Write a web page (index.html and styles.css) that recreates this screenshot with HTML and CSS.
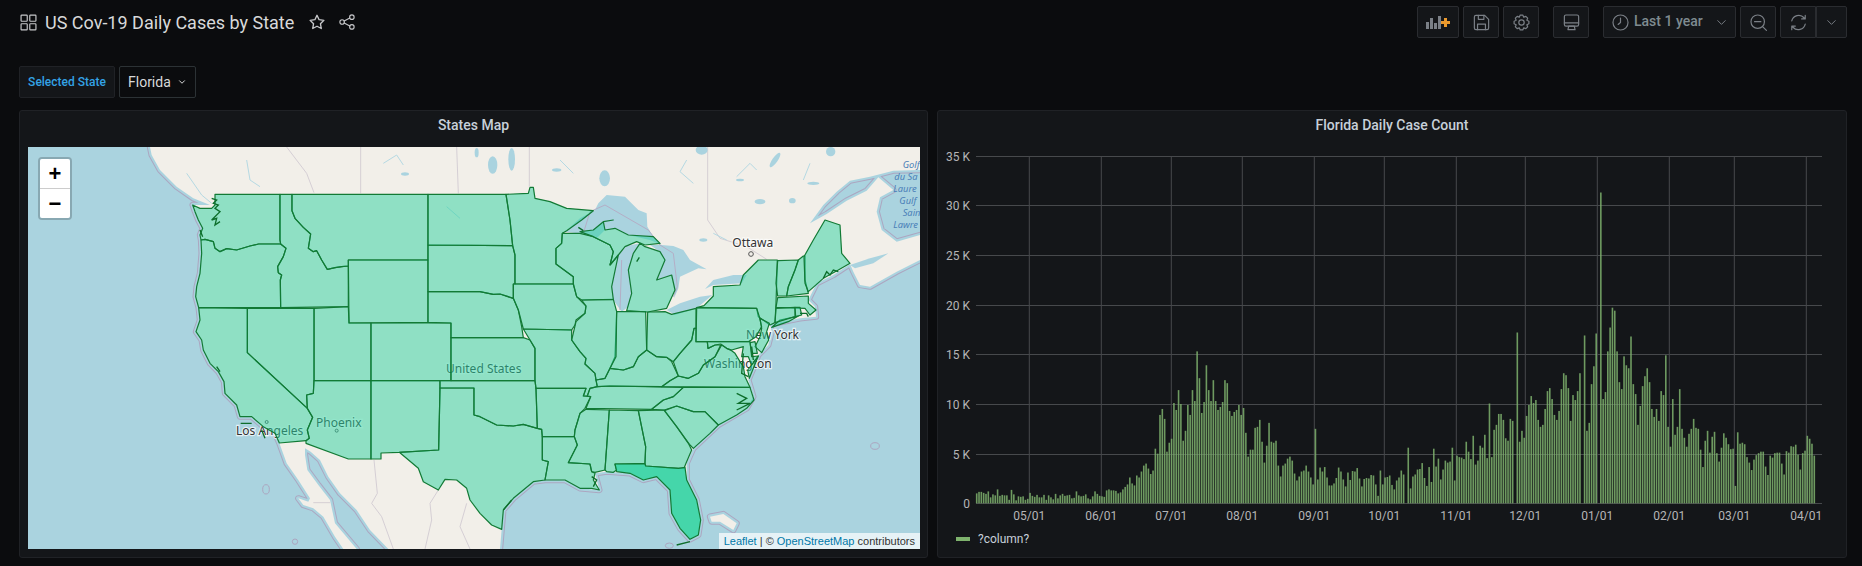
FILE: index.html
```html
<!DOCTYPE html>
<html lang="en">
<head>
    <meta charset="UTF-8">
    <meta name="viewport" content="width=device-width, initial-scale=1.0">
    <title>US Cov-19 Daily Cases by State</title>
    <link rel="stylesheet" href="styles.css">
</head>
<body>
    <header class="topbar">
        <div class="title-group">
            <svg class="icon icon-grid" viewBox="0 0 16 16"><rect x="1" y="1" width="5.8" height="5.8" rx=".6"/><rect x="9.2" y="1" width="5.8" height="5.8" rx=".6"/><rect x="1" y="9.2" width="5.8" height="5.8" rx=".6"/><rect x="9.2" y="9.2" width="5.8" height="5.8" rx=".6"/></svg>
            <h1>US Cov-19 Daily Cases by State</h1>
            <svg class="icon star" viewBox="0 0 24 24"><polygon points="12 3 14.8 8.9 21.2 9.8 16.6 14.3 17.7 20.7 12 17.7 6.3 20.7 7.4 14.3 2.8 9.8 9.2 8.9"/></svg>
            <svg class="icon share" viewBox="0 0 24 24"><circle cx="18.5" cy="5.5" r="3"/><circle cx="5.5" cy="12" r="3"/><circle cx="18.5" cy="18.5" r="3"/><path d="M8.2 10.6l7.6-3.8M8.2 13.4l7.6 3.8"/></svg>
        </div>
        <div class="toolbar">
            <div class="btn btn-add">
                <svg width="26" height="16" viewBox="0 0 26 16"><path class="bars" d="M1 8h3v7H1zM5 4h3v11H5zM9 9h3v6H9zM13 2h3v13h-3z"/><path class="plus" d="M19 4h3v3h3v3h-3v3h-3v-3h-3V7h3z"/></svg>
            </div>
            <div class="btn">
                <svg class="icon" viewBox="0 0 24 24"><path d="M5 3h11l5 5v11a2 2 0 0 1-2 2H5a2 2 0 0 1-2-2V5a2 2 0 0 1 2-2z"/><path d="M8 3v5h7V3M7 21v-7h10v7"/></svg>
            </div>
            <div class="btn">
                <svg class="icon" viewBox="0 0 24 24"><polygon points="21.36,13.65 18.74,14.79 19.78,17.45 17.45,19.78 14.79,18.74 13.65,21.36 10.35,21.36 9.21,18.74 6.55,19.78 4.22,17.45 5.26,14.79 2.64,13.65 2.64,10.35 5.26,9.21 4.22,6.55 6.55,4.22 9.21,5.26 10.35,2.64 13.65,2.64 14.79,5.26 17.45,4.22 19.78,6.55 18.74,9.21 21.36,10.35"/><circle cx="12" cy="12" r="3.4"/></svg>
            </div>
            <div class="btn btn-spaced">
                <svg class="icon" viewBox="0 0 24 24"><rect x="3" y="2.5" width="18" height="14" rx="2"/><path d="M3 12.5h18M7.5 21h9l-1-4.5h-7z"/></svg>
            </div>
            <div class="btn btn-time btn-spaced">
                <svg class="icon" viewBox="0 0 24 24"><circle cx="12" cy="12" r="9.5"/><path d="M12 6.5V12l-3 2.5"/></svg>
                <span>Last 1 year</span>
                <svg class="icon chevron" viewBox="0 0 24 24"><path d="M6 9l6 6 6-6"/></svg>
            </div>
            <div class="btn">
                <svg class="icon" viewBox="0 0 24 24"><circle cx="11" cy="11" r="8.5"/><path d="M7 11h8M17.5 17.5L22 22"/></svg>
            </div>
            <div class="btn-pair">
                <div class="btn">
                    <svg class="icon" viewBox="0 0 24 24"><path d="M3.5 10A9 9 0 0 1 19 6l1.5 1.5M20.5 14A9 9 0 0 1 5 18l-1.5-1.5M20.5 3v4.5H16M3.5 21v-4.5H8"/></svg>
                </div>
                <div class="btn btn-caret">
                    <svg class="icon chevron" viewBox="0 0 24 24"><path d="M6 9l6 6 6-6"/></svg>
                </div>
            </div>
        </div>
    </header>

    <div class="variables">
        <label class="var-label">Selected State</label>
        <div class="var-value">
            <span>Florida</span>
            <svg class="icon chevron-small" viewBox="0 0 24 24"><path d="M6 9l6 6 6-6"/></svg>
        </div>
    </div>

    <main class="panels">
        <section class="panel">
            <div class="panel-title">States Map</div>
            <div class="map">
                <svg class="map-svg" viewBox="24 21 2676 1206">
                    <rect class="water" x="24" y="21" width="2676" height="1206"/>
                    <defs>
                        <polygon id="landWest" points="390,21 1381,21 1381,1227 1105,1227 1050,1170 1010,1110 960,1060 925,1010 900,960 872,935 855,925 855,945 862,990 895,1035 930,1080 945,1150 1010,1227 970,1227 945,1190 910,1130 880,1105 850,1095 835,1075 865,1085 870,1075 835,1020 800,970 778,909 765,880 730,860 695,830 660,830 650,795 615,760 612,725 595,695 570,670 550,630 545,600 528,575 540,540 536,503 527,470 530,440 540,400 545,340 543,300 540,285 548,265 535,240 525,215 518,195 570,195 520,175 470,140 420,90 395,45"/>
                        <polygon id="landEast" transform="translate(1380 0)" points="0,21 1320,21 1320,90 1240,92 1170,110 1110,122 1070,155 1030,195 990,250 1040,222 1100,182 1160,152 1195,112 1240,150 1200,172 1190,215 1205,270 1250,305 1320,285 1320,360 1250,395 1170,440 1140,435 1120,395 1110,372 1060,405 1010,430 985,480 1005,500 1008,530 960,535 870,553 875,575 865,615 835,645 820,685 805,720 820,770 800,805 715,855 640,925 620,970 620,1020 650,1080 662,1140 655,1185 630,1198 600,1165 575,1120 570,1050 530,1010 490,1020 450,1000 380,995 345,1000 358,1050 300,1045 255,1020 195,1020 160,1025 100,1075 70,1110 65,1168 60,1227 0,1227"/>
                        <polygon id="landCuba" transform="translate(1380 0)" points="690,1130 730,1122 770,1150 760,1170 720,1145 695,1145"/>
                    </defs>
                    <use class="coast-ring" href="#landWest"/>
                    <use class="coast-ring" href="#landEast"/>
                    <use class="coast-ring" href="#landCuba"/>
                    <use class="coast-gap" href="#landWest"/>
                    <use class="coast-gap" href="#landEast"/>
                    <use class="coast-gap" href="#landCuba"/>
                    <use class="land" href="#landWest"/>
                    <use class="land" href="#landEast"/>
                    <use class="land" href="#landCuba"/>

                    <ellipse class="ring" cx="738" cy="1048" rx="10" ry="14"/>
                    <circle class="ring" cx="825" cy="1205" r="8"/>
                    <ellipse class="ring" cx="2565" cy="918" rx="13" ry="10"/>
                    <ellipse class="ring" cx="1948" cy="1217" rx="12" ry="8"/>

                    <path class="border" d="M800 21L860 100L882 158M1022 21V160M1310 21L1315 160M1528 21V140M2063 21V240L2100 295L2180 320L2240 358M1062 960L1072 1060L1055 1090L1085 1130L1120 1227M1255 1050L1230 1090L1235 1140L1215 1227M880 1088H930M1340 1090L1320 1160L1350 1227"/>
                    <path class="water-line" d="M500 100L545 165L575 190M680 60L690 120L720 140M1090 70L1130 45L1150 75M1280 200L1320 235M2000 60L1980 95L2020 130M2150 110L2190 70L2210 90M2370 70L2350 120M2080 280L2120 300M1620 60L1660 100"/>
                    <g class="water" transform="translate(1380 0)">
                        <polygon points="255,275 300,235 345,210 355,190 380,165 435,170 475,210 500,220 502,260 520,290 545,315 510,300 445,285 405,265 375,270 350,295 310,282"/>
                        <polygon points="415,345 395,440 400,480 425,515 445,500 455,460 445,390 460,340 480,310 440,318"/>
                        <polygon points="510,315 545,315 580,318 610,330 630,360 680,388 655,385 600,410 595,445 582,475 585,450 575,405 530,420 555,360 540,335"/>
                        <polygon points="560,510 585,525 650,505 697,465 660,470 600,490"/>
                        <polygon points="675,447 700,435 785,430 800,405 760,405 700,420"/>
                        <polygon points="1110,375 1170,355 1225,340 1180,370 1125,385"/>
                        <ellipse cx="374" cy="115" rx="16" ry="24"/>
                        <ellipse cx="38" cy="75" rx="14" ry="26"/>
                        <ellipse cx="95" cy="58" rx="10" ry="34"/>
                        <ellipse cx="937" cy="182" rx="10" ry="8"/>
                        <ellipse cx="885" cy="60" rx="8" ry="26" transform="rotate(35 885 60)"/>
                        <ellipse cx="840" cy="185" rx="16" ry="8"/>
                        <ellipse cx="1052" cy="35" rx="14" ry="14"/>
                        <ellipse cx="665" cy="30" rx="18" ry="14"/>
                        <ellipse cx="230" cy="90" rx="14" ry="5"/>
                        <ellipse cx="1000" cy="130" rx="18" ry="5"/>
                        <ellipse cx="780" cy="120" rx="12" ry="4"/>
                        <ellipse cx="670" cy="300" rx="12" ry="5"/>
                    </g>
                    <ellipse class="water" cx="1155" cy="102" rx="12" ry="5"/>
                    <ellipse class="water" cx="1370" cy="38" rx="6" ry="14"/>
                    <path class="lake-border" transform="translate(1380 0)" d="M310 280L330 215L375 195L505 270L540 315L580 340L592 440L580 470M425 360L420 510"/>

                    <g class="place">
                        <text x="648" y="884">Los Angeles</text>
                        <text x="888" y="860">Phoenix</text>
                        <circle class="dot" cx="950" cy="872" r="4.5"/>
                        <circle class="dot" cx="740" cy="846" r="4.5"/>
                        <text x="1278" y="698">United States</text>
                    </g>
                    <g class="place" transform="translate(1380 0)">
                        <text x="757" y="322">Ottawa</text>
                        <circle class="dot" cx="813" cy="342" r="7"/>
                        <text x="798" y="596">New York</text>
                        <text x="672" y="684">Washington</text>
                    </g>
                    <g class="sea-label" transform="translate(1380 0)">
                        <text x="1268" y="84">Golf</text>
                        <text x="1243" y="120">du Sa</text>
                        <text x="1240" y="156">Laure</text>
                        <text x="1258" y="191">Gulf</text>
                        <text x="1268" y="227">Sain</text>
                        <text x="1240" y="264">Lawre</text>
                    </g>

                    <g class="states">
                        <polygon points="585,163 780,163 780,300 782,312 716,312 690,318 650,330 620,326 600,335 585,325 580,305 555,298 543,300 540,285 548,265 535,240 525,215 518,195 540,205 575,205 585,195"/>
                        <polygon points="543,300 555,298 580,305 585,325 600,335 620,326 650,330 690,318 716,312 782,312 798,325 790,350 773,380 775,398 785,405 781,420 782,503 536,503 527,470 530,440 540,400 545,340"/>
                        <polygon points="780,163 816,163 816,212 825,235 850,262 872,282 865,325 880,335 890,332 905,360 922,388 945,383 965,380 985,378 985,500 782,503 781,420 785,405 775,398 773,380 790,350 798,325 782,312 780,300"/>
                        <polygon points="816,163 1224,163 1224,360 985,360 985,378 965,380 945,383 922,388 905,360 890,332 880,335 865,325 872,282 850,262 825,235 816,212"/>
                        <polygon points="985,360 1224,360 1224,547 987,549"/>
                        <polygon points="882,505 985,500 987,549 1053,549 1053,722 882,722"/>
                        <polygon points="682,505 882,505 882,722 880,760 860,765 862,805 682,638"/>
                        <polygon points="536,503 682,505 682,638 862,805 878,832 862,870 868,895 858,902 778,909 765,880 730,860 695,830 660,830 650,795 615,760 612,725 595,695 570,670 550,630 545,600 528,575 540,540"/>
                        <polygon points="882,722 1053,722 1053,957 985,957 858,910 858,902 868,895 862,870 878,832 862,805 860,765 880,760"/>
                        <polygon points="1053,549 1293,549 1293,722 1053,722"/>
                        <polygon points="1053,722 1260,722 1260,745 1256,930 1138,937 1083,939 1083,957 1053,957"/>
                        <polygon points="1260,744 1362,744 1362,825 1380,830 1430,855 1480,858 1510,853 1552,865 1565,868 1567,890 1567,960 1585,965 1575,1020 1540,1025 1480,1075 1450,1110 1445,1168 1415,1155 1380,1120 1350,1080 1340,1045 1310,1020 1275,1018 1255,1050 1210,1025 1195,985 1138,937 1256,930"/>
                        <polygon points="1260,722 1545,722 1548,745 1552,865 1510,853 1480,858 1430,855 1380,830 1362,825 1362,744 1260,744"/>
                        <polygon points="1293,593 1510,593 1530,600 1545,625 1545,722 1293,722"/>
                        <polygon points="1224,455 1380,455 1420,463 1440,462 1480,475 1495,510 1505,560 1510,593 1293,593 1293,549 1224,547"/>
                        <polygon points="1224,315 1478,317 1485,345 1485,432 1480,432 1480,475 1440,462 1420,463 1380,455 1224,455"/>
                        <polygon points="1224,163 1458,163 1470,240 1478,317 1224,315"/>
                        <polygon points="1458,163 1525,160 1530,142 1540,142 1545,175 1590,185 1640,205 1720,212 1685,240 1640,272 1627,280 1625,310 1608,325 1608,372 1660,410 1660,432 1485,432 1485,345 1478,317 1470,240"/>
                        <g transform="translate(1380 0)">
                            <polygon points="100,432 280,432 290,470 318,498 315,520 288,540 285,555 275,570 130,567 115,510 100,475"/>
                            <polygon points="130,567 275,570 275,600 300,635 318,655 315,672 345,700 348,720 352,740 330,745 322,768 310,768 318,745 168,745 165,722 165,625 150,600"/>
                            <polygon points="168,745 318,745 310,768 332,770 315,805 300,820 285,870 283,890 187,890 185,868 172,865"/>
                            <polygon points="187,890 283,890 292,915 265,968 330,972 335,995 345,1000 340,1020 358,1050 335,1045 300,1045 255,1020 195,1020 205,965 187,960"/>
                            <polygon points="318,808 388,810 375,990 345,997 335,995 330,972 265,968 292,915 283,890 285,870 300,820"/>
                            <polygon points="388,810 475,812 497,920 495,970 405,972 410,990 400,997 380,995 375,990"/>
                            <polygon points="475,812 553,810 590,860 625,910 635,930 618,970 612,985 595,985 497,978 495,970 497,920"/>
                            <polygon points="553,812 590,798 640,815 675,815 715,855 690,880 640,925 630,915 590,860"/>
                            <polygon points="610,742 810,742 822,780 800,805 770,825 715,855 675,815 640,815 590,798 553,810 515,808 550,780 580,770"/>
                            <polygon points="352,740 390,738 610,742 580,770 550,780 515,808 318,805 332,770 322,768 330,745"/>
                            <polygon points="352,740 348,720 375,715 390,685 430,690 460,680 475,650 500,630 530,650 560,652 575,665 595,708 570,722 545,740 390,738"/>
                            <polygon points="545,740 570,722 595,708 625,715 655,700 670,675 705,650 725,615 740,625 755,632 765,640 780,665 790,680 795,710 810,742"/>
                            <polygon points="648,565 648,605 682,605 684,625 705,615 722,615 705,650 670,675 655,700 625,715 595,708 580,665 600,640 635,600 642,565"/>
                            <polygon points="503,516 555,515 575,523 648,505 648,565 642,565 635,600 600,640 580,665 560,652 530,650 500,630"/>
                            <polygon points="410,515 497,515 500,630 475,650 460,680 430,690 390,685 405,650"/>
                            <polygon points="305,480 400,478 410,515 408,650 390,685 375,715 348,720 345,700 315,672 318,655 300,635 275,600 288,545 315,520 318,498"/>
                            <polygon points="247,280 300,280 340,290 390,315 400,335 390,375 415,345 395,440 400,478 305,480 290,470 280,432 280,410 228,372 228,325 245,310"/>
                            <polygon points="440,512 503,516 560,505 585,450 575,405 530,420 555,360 540,335 495,320 480,310 460,340 445,390 455,460"/>
                            <polygon points="300,275 340,290 390,315 400,335 390,375 415,345 435,320 470,305 495,315 540,310 520,290 445,285 405,265 375,270 370,245 400,240 370,245 340,270"/>
                            <polygon points="672,497 700,468 700,440 780,435 790,405 835,360 892,360 890,430 888,490 885,548 870,555 835,530 830,505 650,503"/>
                            <polygon points="875,562 900,540 955,528 925,545"/>
                            <polygon points="650,503 830,505 838,530 845,560 828,590 805,605 648,605"/>
                            <polygon points="840,535 868,550 860,575 866,600 845,638 825,620 840,590 845,565"/>
                            <polygon points="810,608 825,605 832,640 815,640"/>
                            <polygon points="682,605 810,605 815,650 835,648 815,675 805,650 785,650 790,620 755,630 740,625 722,612 705,615 684,625"/>
                            <polygon points="815,675 835,648 820,685 808,715 803,690"/>
                            <polygon points="893,362 955,360 945,390 925,440 920,468 893,468 888,430"/>
                            <polygon points="955,360 970,348 975,348 975,420 985,460 920,468 925,440 945,390"/>
                            <polygon points="975,430 972,350 1000,300 1035,240 1080,255 1085,340 1110,370 1075,390 1030,415 985,455"/>
                            <polygon points="893,473 985,468 985,490 1008,510 990,525 975,505 888,502"/>
                            <polygon points="888,505 945,502 945,530 885,548"/>
                            <polygon points="945,502 960,502 965,525 947,530"/>
                            <polygon class="selected" points="405,972 495,972 497,978 595,985 615,982 620,1020 650,1080 662,1140 655,1185 630,1198 600,1165 575,1120 570,1050 530,1010 490,1020 450,1000 410,995"/>
                        </g>
                    </g>

                    <path class="scribble" d="M575 175L590 180L580 190L595 195L585 205L600 215L575 240L590 235L585 255L600 245M590 680L600 695M662 850H695M725 870L735 895M540 270L548 290"/>
                    <path class="scribble" transform="translate(1380 0)" d="M295 262L310 272M470 365L478 352M1030 415L1040 395L1050 405L1060 390L1075 395M960 520L980 520L985 530M770 760L800 775L775 790L810 790L770 810M790 640L785 700L805 710M815 620L820 660M70 1110L95 1080M335 1010L350 1020L340 1040M590 1215L630 1205"/>
                </svg>
                <div class="zoom-control">
                    <div class="zoom-btn">+</div>
                    <div class="zoom-btn">&minus;</div>
                </div>
                <div class="attribution"><a>Leaflet</a> | © <a>OpenStreetMap</a> contributors</div>
            </div>
        </section>

        <section class="panel">
            <div class="panel-title">Florida Daily Case Count</div>
            <svg id="chart" class="chart" viewBox="938 147 908 378"></svg>
            <div class="legend">
                <span class="legend-swatch"></span>
                <span>?column?</span>
            </div>
        </section>
    </main>

    <script src="chart.js"></script>
</body>
</html>
```

FILE: styles.css
```css
* {
    box-sizing: border-box;
}
body {
    margin: 0;
    height: 566px;
    overflow: hidden;
    padding: 6px 15px 0 19px;
    background-color: #0b0c0e;
    color: #d8d9da;
    font-family: Roboto, "Liberation Sans", sans-serif;
}
.icon {
    width: 19px;
    height: 19px;
    fill: none;
    stroke: currentColor;
    stroke-width: 1.5;
    stroke-linejoin: round;
    stroke-linecap: round;
    flex: none;
}
.topbar {
    display: flex;
    justify-content: space-between;
    height: 32px;
}
.title-group {
    display: flex;
    align-items: center;
    color: #c7c8ca;
}
.icon-grid {
    width: 17px;
    height: 17px;
    margin-left: 1px;
}
.icon-grid rect {
    stroke-width: 1.1;
}
.title-group h1 {
    margin: 0 14px 0 8px;
    font-size: 18px;
    font-weight: 400;
    color: #d8d9da;
}
.star {
    width: 18px;
    height: 18px;
    stroke-width: 1.8;
}
.share {
    width: 18px;
    height: 18px;
    margin-left: 12px;
}
.toolbar {
    display: flex;
    color: #7b8087;
}
.btn {
    display: flex;
    align-items: center;
    justify-content: center;
    width: 36px;
    height: 32px;
    margin-left: 4px;
    background-color: #141619;
    border: 1px solid #2a2c30;
    border-radius: 2px;
}
.btn-add {
    width: 42px;
    margin-left: 0;
}
.bars {
    fill: #7b8087;
}
.plus {
    fill: #eb9a2e;
}
.btn-spaced {
    margin-left: 14px;
}
.btn-time {
    width: 133px;
    padding: 0 6px 0 7px;
    justify-content: flex-start;
    font-size: 14px;
    font-weight: 500;
}
.btn-time span {
    margin-left: 4px;
    margin-bottom: 2px;
    color: #7f8b90;
}
.btn-time .chevron {
    margin-left: auto;
}
.btn-pair {
    display: flex;
    margin-left: 4px;
}
.btn-pair .btn {
    margin-left: 0;
    border-radius: 2px 0 0 2px;
}
.btn-pair .btn-caret {
    width: 31px;
    border-left: 1px solid #2a2c30;
    border-radius: 0 2px 2px 0;
}
.chevron {
    width: 15px;
    height: 15px;
}
.variables {
    display: flex;
    margin-top: 28px;
    height: 32px;
}
.var-label {
    display: flex;
    align-items: center;
    justify-content: center;
    width: 96px;
    background-color: #141619;
    border: 1px solid #202226;
    border-radius: 2px;
    color: #33a2e5;
    font-size: 12px;
    font-weight: 500;
}
.var-value {
    display: flex;
    align-items: center;
    gap: 6px;
    width: 77px;
    margin-left: 4px;
    padding-left: 8px;
    border: 1px solid #2c3235;
    border-radius: 2px;
    font-size: 14px;
}
.chevron-small {
    width: 10px;
    height: 10px;
    stroke-width: 2.4;
}
.panels {
    display: grid;
    grid-template-columns: 909px 910px;
    gap: 9px;
    margin-top: 12px;
    height: 448px;
}
.panel {
    background-color: #141619;
    border: 1px solid #202226;
    border-radius: 3px;
}
.panel-title {
    height: 28px;
    margin-bottom: 8px;
    line-height: 28px;
    text-align: center;
    font-size: 14px;
    font-weight: 500;
    color: #c7d0d9;
}
.map {
    position: relative;
    width: 892px;
    height: 402px;
    margin-left: 8px;
    overflow: hidden;
}
.map-svg {
    display: block;
    width: 892px;
    height: 402px;
}
.water {
    fill: #aad3df;
}
.land {
    fill: #f2efe9;
}
.coast-ring {
    fill: #aca6c0;
    stroke: #aca6c0;
    stroke-width: 19;
    stroke-linejoin: round;
}
.coast-gap {
    fill: #aad3df;
    stroke: #aad3df;
    stroke-width: 13;
    stroke-linejoin: round;
}
.ring {
    fill: none;
    stroke: #aca6c0;
    stroke-width: 3;
}
.border {
    fill: none;
    stroke: #cfc8d0;
    stroke-width: 2.5;
}
.lake-border {
    fill: none;
    stroke: #b4aec6;
    stroke-width: 3;
}
.water-line {
    fill: none;
    stroke: #b5d9e3;
    stroke-width: 3;
}
.place text {
    font-family: "Noto Sans", "Open Sans", sans-serif;
    font-size: 36px;
    fill: #333333;
    stroke: #ffffff;
    stroke-width: 7px;
    stroke-opacity: .7;
    paint-order: stroke;
}
.dot {
    fill: none;
    stroke: #555555;
    stroke-width: 3;
}
.sea-label text {
    font-family: "Noto Sans", "Open Sans", sans-serif;
    font-size: 28px;
    font-style: italic;
    fill: #4a80b8;
}
.states polygon {
    fill: rgba(44, 209, 159, .5);
    stroke: #127a35;
    stroke-width: 3.6;
    stroke-linejoin: round;
}
.states .selected {
    fill: rgba(39, 209, 159, .85);
}
.scribble {
    fill: none;
    stroke: #0d6e2b;
    stroke-width: 4;
}
.zoom-control {
    position: absolute;
    top: 10px;
    left: 10px;
    width: 34px;
    border: 2px solid rgba(0, 0, 0, .2);
    border-radius: 4px;
    background-clip: padding-box;
}
.zoom-btn {
    height: 29px;
    line-height: 30px;
    text-align: center;
    background-color: #ffffff;
    color: #000000;
    font-family: "Liberation Sans", sans-serif;
    font-size: 22px;
    font-weight: 700;
}
.zoom-btn:first-child {
    height: 30px;
    border-bottom: 1px solid #cccccc;
    border-radius: 2px 2px 0 0;
}
.zoom-btn:last-child {
    border-radius: 0 0 2px 2px;
}
.attribution {
    position: absolute;
    right: 0;
    bottom: 0;
    height: 16px;
    padding: 0 5px;
    line-height: 16px;
    background-color: rgba(255, 255, 255, .7);
    color: #333333;
    font-family: "Liberation Sans", sans-serif;
    font-size: 11px;
}
.attribution a {
    color: #0078a8;
}
.chart {
    display: block;
    width: 908px;
    height: 378px;
}
.grid-line {
    stroke: #47494c;
    stroke-width: 1;
}
.bar {
    fill: #7eb26d;
    fill-opacity: .85;
}
.axis-label {
    font-family: Roboto, sans-serif;
    font-size: 12px;
    fill: #b4b5b7;
}
.legend {
    display: flex;
    align-items: center;
    height: 28px;
    padding-left: 18px;
    font-size: 12px;
    color: #c7d0d9;
}
.legend-swatch {
    width: 14px;
    height: 4px;
    margin-right: 8px;
    background-color: #7eb26d;
}
```

FILE: chart.js
```js
const cases = [
    1.0,1.15,1.15,1.05,0.95,1.2,0.6,0.9,0.8,1.4,0.75,0.85,0.8,0.8,0.35,1.35,0.9,0.3,0.7,0.65,
    0.7,0.35,0.45,1.05,0.75,0.65,0.85,0.6,0.6,0.85,0.35,0.8,0.6,0.4,0.95,0.5,0.8,0.95,0.75,0.8,
    0.85,0.5,0.55,1.2,0.8,0.7,0.75,0.9,0.5,0.4,0.7,1.2,0.95,0.75,0.7,0.65,1.3,1.4,1.3,1.3,
    1.25,1.0,1.1,1.4,1.65,1.9,2.6,2.0,1.8,2.8,2.6,3.2,3.8,4.0,3.5,2.95,3.3,5.5,5.0,8.9,
    9.5,8.5,5.2,6.1,6.5,10.1,9.4,11.4,10.0,6.3,7.3,9.9,8.9,11.4,10.3,15.3,12.6,9.1,10.2,13.9,
    11.4,10.3,12.4,10.3,9.4,9.7,10.2,12.4,12.1,9.3,8.8,9.2,9.4,9.9,8.9,9.6,7.1,4.7,5.4,5.4,
    7.6,7.7,8.4,6.2,4.1,5.8,8.1,6.2,6.1,6.3,3.8,2.7,3.8,4.0,4.5,4.7,4.3,3.0,2.3,2.7,
    3.2,3.3,3.8,3.2,2.6,1.9,7.5,2.4,3.6,3.2,3.65,2.6,1.8,1.8,2.0,2.55,3.6,3.2,2.4,1.7,
    3.1,2.35,3.25,3.2,3.55,2.5,1.7,2.45,2.55,2.5,2.85,2.8,1.9,0.75,3.3,1.9,2.6,2.65,2.8,1.85,
    1.4,2.3,2.6,
    3.3,2.9,0,5.6,1.5,2.7,2.9,3.4,3.45,4.05,2.55,1.75,3.65,2.15,5.5,3.7,4.5,2.4,3.4,4.3,
    4.1,4.2,5.6,2.3,4.8,4.65,4.6,4.45,6.2,5.2,4.45,6.8,3.9,4.3,5.8,5.6,6.9,4.55,10.05,4.65,
    7.4,7.9,9,9,8.4,6.55,6.3,8.5,8.3,0,17.2,6.2,7.3,6.6,8.8,9.9,10.8,10.1,10.4,8.4,
    7.7,7.9,9.5,11.3,11.6,10.5,8.9,8.4,9.3,11.5,13.1,12.9,11.6,8.3,10.9,10.4,11.3,13.1,0,16.9,
    7.3,8.1,12,13.8,17.1,0,31.3,10.5,11.2,15.3,17.7,19.7,19.4,15.3,12.2,11.5,14.8,13.9,13.6,16.8,
    12,11,7.9,9.8,11.8,12.8,13.6,12.2,9.5,8.7,9.5,8.3,11.3,10.9,14.9,7.7,5.7,10.5,6.9,7.7,
    11.5,7.5,6.6,5.7,7,7.5,8.5,7.6,7.5,5.4,3.65,6.3,7.3,5.1,6.7,7.2,5.05,4.2,5.6,7.05,
    6.6,5.95,5.45,5.5,1.75,7.15,6,6.1,5.95,4.65,4.1,3.35,4.4,4.85,5.05,5.2,5.2,3.7,2.85,4.8,
    4.6,5.05,5.1,5.1,4,2.9,5.25,5.1,5.75,5.7,5.9,4.9,3.4,5.05,5.3,6.8,6.5,6,4.8
];

const chart = document.getElementById('chart');
const left = 976;
const right = 1822;
const zero = 503.3;
const pxPerK = 9.93;
const firstBar = 976.7;
const lastBar = 1814.3;

const yTicks = [0, 5, 10, 15, 20, 25, 30, 35];
const xTicks = [
    ['05/01', 1029.3], ['06/01', 1101.3], ['07/01', 1171.3], ['08/01', 1242.3],
    ['09/01', 1314.3], ['10/01', 1384.3], ['11/01', 1456.3], ['12/01', 1525.3],
    ['01/01', 1597.3], ['02/01', 1669.3], ['03/01', 1734.3], ['04/01', 1806.3]
];

function add(tag, attrs, text) {
    const el = document.createElementNS('http://www.w3.org/2000/svg', tag);
    Object.keys(attrs).forEach(key => el.setAttribute(key, attrs[key]));
    if (text) {
        el.textContent = text;
    }
    chart.appendChild(el);
}

yTicks.forEach(k => {
    const y = Math.round(zero - k * pxPerK) + 0.5;
    add('line', { class: 'grid-line', x1: left, x2: right, y1: y, y2: y });
    add('text', { class: 'axis-label', x: 970, y: y + 4, 'text-anchor': 'end' }, k ? k + ' K' : '0');
});

xTicks.forEach(([label, x]) => {
    add('line', { class: 'grid-line', x1: x, x2: x, y1: 156, y2: zero });
    add('text', { class: 'axis-label', x: x, y: 520, 'text-anchor': 'middle' }, label);
});

const pitch = (lastBar - firstBar) / (cases.length - 1);
cases.forEach((k, i) => {
    if (k > 0) {
        const h = k * pxPerK;
        add('rect', { class: 'bar', x: (firstBar + i * pitch - 0.8).toFixed(2), y: (zero - h).toFixed(2), width: 1.6, height: h.toFixed(2) });
    }
});
```
